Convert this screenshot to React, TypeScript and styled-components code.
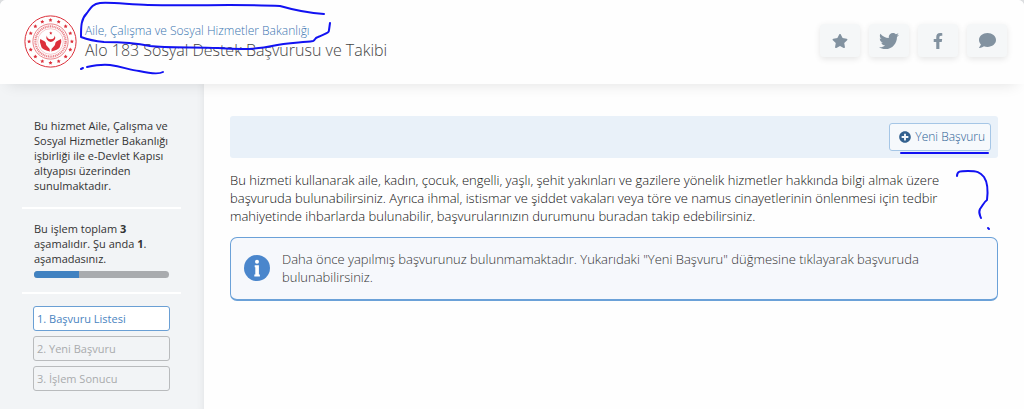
import React from "react";
import styled, { createGlobalStyle } from "styled-components";
import { FaComment, FaFacebookF, FaPlusCircle, FaStar, FaTwitter } from "react-icons/fa";

const GlobalStyle = createGlobalStyle`
  *, *::before, *::after { box-sizing: border-box; }
  html { background: #dcdee0; }
  body {
    margin: 0;
    font-family: "Open Sans", "Noto Sans", sans-serif;
    font-size: 13px;
    line-height: 18px;
    color: #111;
  }
  h1, p, ol { margin: 0; padding: 0; font-weight: inherit; }
`;

const Page = styled.div`
  min-height: 100vh;
  display: flex;
  flex-direction: column;
  background: #fefefe;
  border-radius: 6px 6px 0 0;
`;

const Header = styled.header`
  position: relative;
  z-index: 1;
  display: flex;
  align-items: flex-start;
  gap: 8px;
  min-height: 84px;
  padding: 15px 17px 15px 24px;
  background: #fefefe;
  border-radius: 6px 6px 0 0;
  box-shadow: 0 8px 14px -8px rgba(0, 0, 0, 0.12);
`;

const Titles = styled.div`
  flex: 1;
  padding-top: 7px;
`;

const Ministry = styled.a`
  display: block;
  font-size: 12px;
  line-height: 18px;
  font-weight: 300;
  color: #3a75b0;
  text-decoration: none;
`;

const ServiceTitle = styled.h1`
  font-size: 16px;
  line-height: 20px;
  font-weight: 300;
  color: #444;
`;

const Actions = styled.div`
  display: flex;
  gap: 9px;
  padding-top: 9px;
`;

const ActionButton = styled.button`
  display: flex;
  align-items: center;
  justify-content: center;
  width: 40px;
  height: 33px;
  padding: 0;
  border: 0;
  border-radius: 4px;
  background: #f5f7f8;
  color: #8292a0;
  box-shadow: 0 2px 6px rgba(0, 0, 0, 0.1);
  cursor: pointer;
`;

const Body = styled.div`
  flex: 1;
  display: flex;
`;

const Sidebar = styled.aside`
  flex: 0 0 204px;
  padding: 34px 23px 16px 22px;
  background: #f2f4f6;
  box-shadow: inset -8px 0 8px -8px rgba(0, 0, 0, 0.08);
  font-size: 11px;
  line-height: 15px;
  color: #333;
`;

const SideSection = styled.section`
  padding: 0 12px 14px;
  margin-bottom: 12px;
  border-bottom: 2px solid #fff;
`;

const ProgressTrack = styled.div`
  height: 7px;
  margin-top: 5px;
  border-radius: 4px;
  background: #a9abae;
  overflow: hidden;
`;

const ProgressFill = styled.div`
  height: 100%;
  background: #4182c1;
`;

const Steps = styled.ol`
  display: flex;
  flex-direction: column;
  gap: 5px;
  padding: 0 11px;
  list-style: none;
`;

const Step = styled.li<{ $active?: boolean }>`
  height: 25px;
  padding: 0 3px;
  border: 1px solid ${(p) => (p.$active ? "#6a9fd4" : "#b9bbbd")};
  border-radius: 3px;
  background: ${(p) => (p.$active ? "#fff" : "transparent")};
  color: ${(p) => (p.$active ? "#4a84bf" : "#a9abad")};
  line-height: 23px;
`;

const Main = styled.main`
  flex: 1;
  min-width: 0;
  padding: 32px 26px;
  font-weight: 300;
`;

const Toolbar = styled.div`
  position: relative;
  display: flex;
  justify-content: flex-end;
  padding: 7px;
  margin-bottom: 13px;
  border-radius: 3px;
  background: #e9f1f9;
`;

const NewButton = styled.button`
  display: flex;
  align-items: center;
  gap: 4px;
  height: 28px;
  padding: 0 5px 0 9px;
  border: 1px solid #a5c6e6;
  border-radius: 3px;
  background: #f6f9fc;
  color: #2a6094;
  font: inherit;
  font-size: 12px;
  cursor: pointer;

  svg { color: #33618f; }
`;

const Notice = styled.div`
  display: flex;
  align-items: center;
  gap: 12px;
  margin-top: 12px;
  padding: 12px 32px 13px 13px;
  border: 1px solid #6ba1d8;
  border-bottom-width: 2px;
  border-radius: 7px;
  background: #f6f8fc;
  color: #333;
`;

const Ink = styled.svg`
  position: absolute;
  fill: none;
  stroke: #1212f2;
  stroke-width: 2;
  stroke-linecap: round;
  stroke-linejoin: round;
  pointer-events: none;
`;

const HeaderInk = styled(Ink)`
  top: 0;
  left: 76px;
`;

const ToolbarInk = styled(Ink)`
  top: 34px;
  right: 0;
`;

const starPoints = (cx: number, cy: number, r: number) =>
  Array.from({ length: 10 }, (_, i) => {
    const a = -Math.PI / 2 + (i * Math.PI) / 5;
    const d = i % 2 ? r * 0.5 : r;
    return `${cx + d * Math.cos(a)},${cy + d * Math.sin(a)}`;
  }).join(" ");

function Emblem() {
  return (
    <svg width="53" height="53" viewBox="-26.5 -26.5 53 53" role="img" aria-label="Bakanlık amblemi">
      <g fill="none" stroke="#dc2f3a">
        <circle r="25.6" strokeWidth="1" />
        <circle r="17.6" strokeWidth="0.7" strokeOpacity="0.85" />
        <circle r="15.1" strokeWidth="2.2" strokeDasharray="1.1 0.7" strokeOpacity="0.6" />
        <circle r="12.8" strokeWidth="0.5" strokeOpacity="0.5" />
      </g>
      <g fill="#dc2f3a">
        {Array.from({ length: 16 }, (_, i) => {
          const a = (i * Math.PI) / 8;
          return <polygon key={i} points={starPoints(21.4 * Math.sin(a), -21.4 * Math.cos(a), 2.1)} />;
        })}
        <polygon points={starPoints(0.3, -8.4, 1.7)} />
        <path d="M-3.6-6A4.4 4.4 0 1 0 4.2-6 3.9 3.7 0 1 1-3.6-6Z" />
        <path d="M-10.3-2.4L-6-.2C-3.5 1.6-5.5 2.4-3.5 4.4L-.8 7.4V10.2C-3.5 8.8-9 8.5-9.4 4.6L-10.6.6Z" />
        <path d="M10.5-2.4L6.2-.2C3.7 1.6 5.7 2.4 3.7 4.4L1 7.4V10.2C3.7 8.8 9.2 8.5 9.6 4.6L10.8.6Z" />
      </g>
    </svg>
  );
}

const InfoBadge = styled.svg`
  flex: none;
  width: 26px;
  height: 26px;
`;

function InfoIcon() {
  return (
    <InfoBadge viewBox="0 0 26 26" aria-hidden="true">
      <circle cx="13" cy="13" r="13" fill="#4a86cc" />
      <g fill="#fff">
        <circle cx="13" cy="6.8" r="2" />
        <path d="M10.7 10.2h4.2v9.3h1v1.9h-5.6v-1.9h1v-7.3h-.6Z" />
      </g>
    </InfoBadge>
  );
}

const actions = [
  { label: "Favorilere ekle", icon: <FaStar size={16} /> },
  { label: "Twitter", icon: <FaTwitter size={20} /> },
  { label: "Facebook", icon: <FaFacebookF size={16} /> },
  { label: "Yorum", icon: <FaComment size={17} /> },
];

const steps = ["1. Başvuru Listesi", "2. Yeni Başvuru", "3. İşlem Sonucu"];
const current = 1;

export default function App() {
  return (
    <>
      <GlobalStyle />
      <Page>
        <Header>
          <Emblem />
          <Titles>
            <Ministry href="#">Aile, Çalışma ve Sosyal Hizmetler Bakanlığı</Ministry>
            <ServiceTitle>Alo 183 Sosyal Destek Başvurusu ve Takibi</ServiceTitle>
          </Titles>
          <Actions>
            {actions.map((a) => (
              <ActionButton key={a.label} type="button" aria-label={a.label}>
                {a.icon}
              </ActionButton>
            ))}
          </Actions>
          <HeaderInk width="260" height="80" aria-hidden="true">
            <path d="M248 14C232 13 218 10 204 6C170 4 115 6 72 5C55 5 38 2 24 3C16 4 14 9 11 13C5 19 5 26 5 37C13 40 18 41 28 42C45 42 60 43 74 46C90 48 120 47 142 48C170 50 184 49 196 46C212 42 225 43 237 41C240 40 238 38 242 37C251 33 253 33 253 30L254 23" />
            <path d="M5 69l2-1M11 67C20 65 26 64 34 65C47 67 54 70 63 71C72 73 82 75 87 72" />
          </HeaderInk>
        </Header>
        <Body>
          <Sidebar>
            <SideSection>
              <p>
                Bu hizmet Aile, Çalışma ve Sosyal Hizmetler Bakanlığı işbirliği ile e-Devlet Kapısı
                altyapısı üzerinden sunulmaktadır.
              </p>
            </SideSection>
            <SideSection>
              <p>
                Bu işlem toplam <b>3</b> aşamalıdır. Şu anda <b>1</b>. aşamadasınız.
              </p>
              <ProgressTrack
                role="progressbar"
                aria-label="Aşama"
                aria-valuemin={0}
                aria-valuemax={steps.length}
                aria-valuenow={current}
              >
                <ProgressFill style={{ width: `${(current / steps.length) * 100}%` }} />
              </ProgressTrack>
            </SideSection>
            <Steps>
              {steps.map((s, i) => (
                <Step key={s} $active={i + 1 === current} aria-current={i + 1 === current ? "step" : undefined}>
                  {s}
                </Step>
              ))}
            </Steps>
          </Sidebar>
          <Main>
            <Toolbar>
              <NewButton type="button">
                <FaPlusCircle size={12} />
                Yeni Başvuru
              </NewButton>
              <ToolbarInk width="102" height="84" aria-hidden="true">
                <path d="M5 3H92" />
                <path d="M61 26C61 21 64 21 72 21C81 21 84 22 88 27C92 33 92 42 91 50C88 52 87 55 84 59C82 63 84 65 85 68M92 78l1 1" />
              </ToolbarInk>
            </Toolbar>
            <p>
              Bu hizmeti kullanarak aile, kadın, çocuk, engelli, yaşlı, şehit yakınları ve gazilere
              yönelik hizmetler hakkında bilgi almak üzere başvuruda bulunabilirsiniz. Ayrıca ihmal,
              istismar ve şiddet vakaları veya töre ve namus cinayetlerinin önlenmesi için tedbir
              mahiyetinde ihbarlarda bulunabilir, başvurularınızın durumunu buradan takip
              edebilirsiniz.
            </p>
            <Notice role="status">
              <InfoIcon />
              <p>
                Daha önce yapılmış başvurunuz bulunmamaktadır. Yukarıdaki "Yeni Başvuru" düğmesine
                tıklayarak başvuruda bulunabilirsiniz.
              </p>
            </Notice>
          </Main>
        </Body>
      </Page>
    </>
  );
}
